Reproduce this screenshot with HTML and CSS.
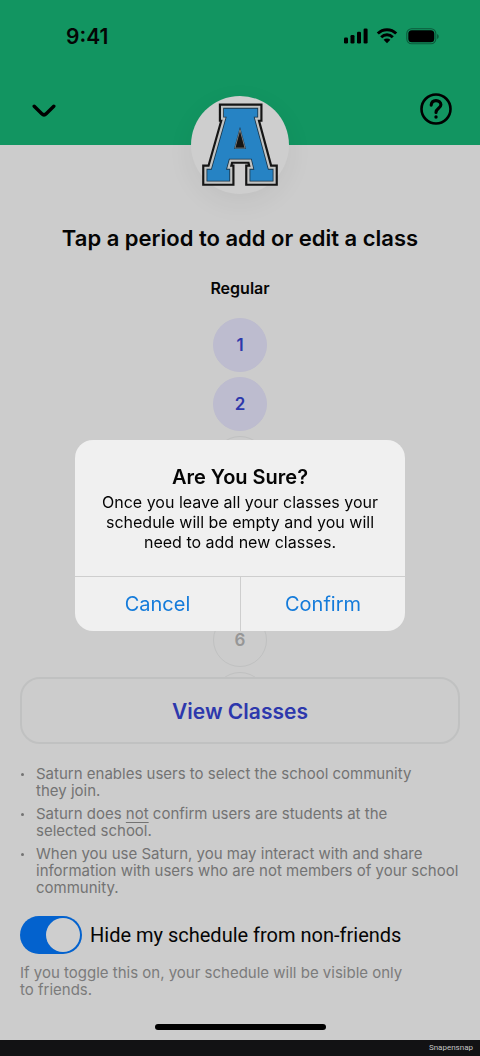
FILE: index.html
```html
<!DOCTYPE html>
<html lang="en">
<head>
<meta charset="utf-8">
<meta name="viewport" content="width=device-width, initial-scale=1">
<title>Edit schedule</title>
<link rel="stylesheet" href="styles.css">
</head>
<body>
<div class="screen">
  <header class="header">
    <div class="status">
      <span class="time">9:41</span>
      <div class="indicators">
        <svg class="signal" width="24" height="16" viewBox="0 0 24 16" aria-hidden="true">
          <rect x="0" y="9.5" width="4" height="6" rx="1.3"/><rect x="6.5" y="7" width="4" height="8.5" rx="1.3"/><rect x="13" y="3.8" width="4" height="11.7" rx="1.3"/><rect x="19.6" y="0.5" width="4" height="15" rx="1.3"/>
        </svg>
        <svg class="wifi" width="22" height="16" viewBox="0 0 22 16" aria-hidden="true">
          <g fill="none" stroke="#000" stroke-width="2.9"><path d="M1.8 5.6a13 13 0 0 1 18.4 0"/><path d="M5.2 9.2a8.2 8.2 0 0 1 11.6 0"/></g>
          <path d="M7.6 11.8a4.8 4.8 0 0 1 6.8 0L11 15.3z"/>
        </svg>
        <svg class="battery" width="34" height="17" viewBox="0 0 34 17" aria-hidden="true">
          <rect x="0.8" y="0.8" width="29" height="15" rx="4.8" fill="none" stroke="#000" stroke-opacity=".4" stroke-width="1.1"/><rect x="2.3" y="2.3" width="26" height="12" rx="3.5"/><path d="M31.2 6v5c1.9-.8 1.9-4.200 0-5z" fill-opacity=".45"/>
        </svg>
      </div>
    </div>
    <nav class="nav">
      <button class="icon-button" type="button" aria-label="Close">
        <svg width="24" height="14" viewBox="0 0 24 14" fill="none" stroke="#000" stroke-width="3.400" stroke-linecap="round" stroke-linejoin="round" aria-hidden="true"><path d="M2.200 2.200L9.800 9.800Q12 12 14.200 9.800L21.800 2.200"/></svg>
      </button>
      <button class="icon-button" type="button" aria-label="Help">
        <svg width="32" height="32" viewBox="0 0 32 32" fill="none" stroke="#000" aria-hidden="true"><circle cx="16" cy="16" r="14.500" stroke-width="2.600"/><path d="M11.200 12.200C11.400 9.200 13.300 7.600 16 7.600s4.900 1.700 4.900 4.200c0 3.400-4.900 3.600-4.900 7.600" stroke-width="3.100" stroke-linecap="round"/><circle cx="16" cy="24" r="1.700" fill="#000" stroke="none"/></svg>
      </button>
    </nav>
    <div class="emblem">
      <svg width="78" height="86" viewBox="63 54 234 258" role="img" aria-label="School emblem">
        <defs>
          <path id="crest" d="M132 74H232V98H221L264 257H278V290H211V257H223L215 224H147L138 257H148V290H82V257H95L140 98H132ZM180 128L162 194H198Z"/>
        </defs>
        <use href="#crest" fill="#151515" stroke="#151515" stroke-width="31"/>
        <use href="#crest" fill="#c2c4c3" stroke="#c2c4c3" stroke-width="18"/>
        <use href="#crest" fill="#1e80bf" stroke="#1b3548" stroke-width="5"/>
        <use href="#crest" fill="#2683c4"/>
        <path d="M180 137L165 192H195Z" fill="#151515" stroke="#8f9190" stroke-width="2"/>
      </svg>
    </div>
  </header>

  <main class="content">
    <h1 class="title">Tap a period to add or edit a class</h1>
    <h2 class="subtitle">Regular</h2>
    <div class="periods">
      <button class="period filled" type="button">1</button>
      <button class="period filled" type="button">2</button>
      <button class="period" type="button" aria-label="3"></button>
      <button class="period" type="button" aria-label="4"></button>
      <button class="period" type="button" aria-label="5"></button>
      <button class="period" type="button">6</button>
      <button class="period" type="button" aria-label="7"></button>
    </div>
  </main>

  <footer class="footer">
    <button class="view" type="button">View Classes</button>
    <ul class="notes">
      <li>Saturn enables users to select the school community<br>they join.</li>
      <li>Saturn does <u>not</u> confirm users are students at the<br>selected school.</li>
      <li>When you use Saturn, you may interact with and share<br>information with users who are not members of your school<br>community.</li>
    </ul>
    <div class="setting">
      <input class="switch" type="checkbox" role="switch" id="hide" checked aria-describedby="hint">
      <label for="hide">Hide my schedule from non-friends</label>
    </div>
    <p class="hint" id="hint">If you toggle this on, your schedule will be visible only<br>to friends.</p>
    <div class="home-bar"></div>
  </footer>
  <div class="credit">Snapensnap</div>
</div>

<div class="overlay">
  <section class="alert" role="alertdialog" aria-modal="true" aria-labelledby="alert-title" aria-describedby="alert-text">
    <div class="alert-body">
      <h2 class="alert-title" id="alert-title">Are You Sure?</h2>
      <p class="alert-text" id="alert-text">Once you leave all your classes your schedule will be empty and you will need to add new classes.</p>
    </div>
    <div class="alert-actions">
      <button type="button">Cancel</button>
      <button type="button">Confirm</button>
    </div>
  </section>
</div>
</body>
</html>
```

FILE: styles.css
```css
* { box-sizing: border-box; }

body {
  margin: 0;
  background: #cccccc;
  color: #050505;
  font-family: Inter, "Liberation Sans", sans-serif;
}

h1, h2, p, ul { margin: 0; padding: 0; }

button {
  margin: 0;
  padding: 0;
  border: 0;
  background: none;
  color: inherit;
  font: inherit;
}

.screen {
  display: flex;
  flex-direction: column;
  height: 100vh;
}

.header {
  position: relative;
  flex: none;
  background: #129561;
  padding: 24px 28px 20px 32px;
}

.status {
  display: flex;
  align-items: center;
  justify-content: space-between;
  padding: 0 12px 0 34px;
  height: 24px;
}

.time { font-size: 21px; font-weight: 600; }

.indicators { display: flex; align-items: center; gap: 8px; }

.nav {
  display: flex;
  align-items: center;
  justify-content: space-between;
  margin-top: 45px;
}

.icon-button { display: flex; }
.icon-button:first-child { padding-top: 4px; }

.emblem {
  position: absolute;
  left: 50%;
  bottom: 0;
  transform: translate(-50%, 50%);
  display: flex;
  align-items: center;
  justify-content: center;
  width: 98px;
  height: 98px;
  border-radius: 50%;
  background: #cecece;
  box-shadow: 0 8px 28px rgba(0, 0, 0, 0.06);
}

.content {
  flex: 1;
  min-height: 0;
  overflow: hidden;
  padding-top: 80px;
  text-align: center;
}

.title { font-size: 22px; line-height: 26px; font-weight: 600; }

.subtitle {
  margin-top: 27px;
  font-size: 16px;
  line-height: 20px;
  font-weight: 600;
}

.periods {
  display: flex;
  flex-direction: column;
  align-items: center;
  gap: 5px;
  margin-top: 20px;
}

.period {
  flex: none;
  width: 54px;
  height: 54px;
  border: 1px solid #c0c1c1;
  border-radius: 50%;
  color: #969696;
  font-size: 17px;
  font-weight: 600;
}

.period.filled {
  border-color: #bdbccf;
  background: #bdbccf;
  color: #2d38ac;
}

.footer { flex: none; padding: 0 20px 10px; }

.view {
  display: block;
  width: 100%;
  height: 67px;
  padding-top: 2px;
  border: 2px solid #c0c1c1;
  border-radius: 20px;
  color: #2d38ac;
  font-size: 21px;
  font-weight: 600;
}

.notes {
  display: grid;
  gap: 6px;
  margin-top: 21px;
  list-style: none;
  color: #737373;
  font-size: 15px;
  line-height: 17px;
}

.notes li { position: relative; padding-left: 16px; }

.notes li::before {
  content: "";
  position: absolute;
  left: 1px;
  top: 8px;
  width: 3px;
  height: 3px;
  border-radius: 50%;
  background: #737373;
}

.notes u { text-underline-offset: 3px; }

.setting {
  display: flex;
  align-items: center;
  gap: 8px;
  margin-top: 20px;
  font-family: Roboto, "Liberation Sans", sans-serif;
  font-size: 20px;
}

.switch {
  appearance: none;
  display: flex;
  justify-content: flex-end;
  width: 62px;
  height: 38px;
  margin: 0;
  padding: 2px;
  border-radius: 19px;
  background: #0362ce;
}

.switch::before {
  content: "";
  width: 34px;
  height: 34px;
  border-radius: 50%;
  background: #cecece;
}

.hint {
  margin-top: 10px;
  color: #7b7b7b;
  font-size: 15px;
  line-height: 17px;
}

.home-bar {
  width: 171px;
  height: 6px;
  margin: 26px auto 0;
  border-radius: 3px;
  background: #000;
}

.credit {
  flex: none;
  padding-right: 7px;
  background: #121214;
  color: #c4c4c4;
  font-family: Roboto, sans-serif;
  font-size: 8px;
  line-height: 16px;
  text-align: right;
}

.overlay {
  position: fixed;
  inset: 0;
  display: flex;
  align-items: center;
  justify-content: center;
  padding: 14px 20px 0;
}

.alert {
  width: 100%;
  max-width: 330px;
  overflow: hidden;
  border-radius: 18px;
  background: #f0f0f0;
  text-align: center;
}

.alert-body { padding: 24px 24px 24px; }

.alert-title { font-size: 20px; line-height: 26px; font-weight: 600; }

.alert-text { margin-top: 2px; font-size: 16px; line-height: 20px; }

.alert-actions {
  display: grid;
  grid-template-columns: 1fr 1fr;
  border-top: 1px solid #cecece;
}

.alert-actions button {
  height: 54px;
  padding-top: 1px;
  color: #147bda;
  font-size: 20px;
}

.alert-actions button + button { border-left: 1px solid #cecece; }
```
